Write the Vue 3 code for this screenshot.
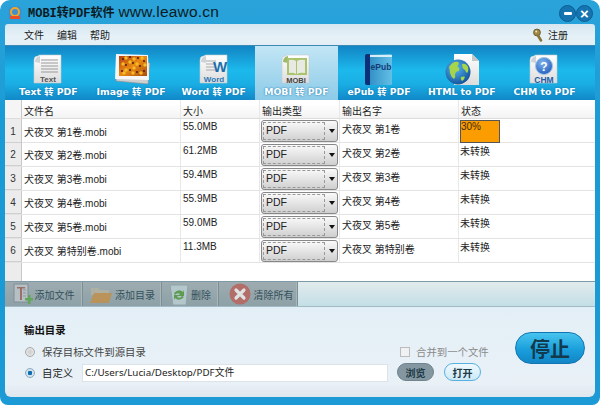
<script setup>
const tabs = [
  { key: 'text', label: 'Text 转 PDF' },
  { key: 'image', label: 'Image 转 PDF' },
  { key: 'word', label: 'Word 转 PDF' },
  { key: 'mobi', label: 'MOBI 转 PDF', active: true },
  { key: 'epub', label: 'ePub 转 PDF' },
  { key: 'html', label: 'HTML to PDF' },
  { key: 'chm', label: 'CHM to PDF' }
]
const rows = [
  { n: 1, file: '犬夜叉 第1卷.mobi', size: '55.0MB', name: '犬夜叉 第1卷', progress: '30%' },
  { n: 2, file: '犬夜叉 第2卷.mobi', size: '61.2MB', name: '犬夜叉 第2卷', status: '未转换' },
  { n: 3, file: '犬夜叉 第3卷.mobi', size: '59.4MB', name: '犬夜叉 第3卷', status: '未转换' },
  { n: 4, file: '犬夜叉 第4卷.mobi', size: '55.9MB', name: '犬夜叉 第4卷', status: '未转换' },
  { n: 5, file: '犬夜叉 第5卷.mobi', size: '59.0MB', name: '犬夜叉 第5卷', status: '未转换' },
  { n: 6, file: '犬夜叉 第特别卷.mobi', size: '11.3MB', name: '犬夜叉 第特别卷', status: '未转换' }
]
const darkDots = [[11,6],[18,4],[26,5],[32,8],[14,12],[21,10],[28,13],[10,18],[18,17],[25,19],[32,18]]
const lightDots = [[14,5],[22,6],[30,5],[11,11],[18,9],[25,11],[33,12],[14,17],[22,15],[29,20],[12,20],[21,20]]
</script>

<template>
  <div class="window">
    <header class="titlebar">
      <svg class="logo" viewBox="0 0 14 14" width="14" height="14">
        <rect x="0.5" y="0.5" width="13" height="13" rx="3" fill="#3d8fd0"/>
        <circle cx="7" cy="6" r="4" fill="none" stroke="#f5a623" stroke-width="2"/>
        <rect x="2" y="10" width="10" height="3" fill="#e8502a"/>
      </svg>
      <span class="title-main">MOBI转PDF软件</span>
      <span class="title-url">www.leawo.cn</span>
      <div class="win-btns">
        <span class="win-btn"><i class="glyph-min"></i></span>
        <span class="win-btn x">×</span>
      </div>
    </header>

    <nav class="menubar">
      <span>文件</span><span>编辑</span><span>帮助</span>
      <span class="register">
        <svg viewBox="0 0 10 14" width="10" height="14">
          <circle cx="4" cy="4.5" r="3.4" fill="#a08a4a" stroke="#6d5c2a"/>
          <circle cx="3.2" cy="3.6" r="1" fill="#f0e6c0"/>
          <path d="M5 7.5l3 5" stroke="#8a7536" stroke-width="2.6" stroke-linecap="round"/>
        </svg>
        注册
      </span>
    </nav>

    <section class="tabs">
      <div v-for="t in tabs" :key="t.key" class="tab" :class="{ active: t.active }">
        <svg class="tab-icon" viewBox="0 0 40 32" width="40" height="32">
          <defs>
            <linearGradient id="pg" x1="0" y1="0" x2="0" y2="1">
              <stop offset="0" stop-color="#ffffff"/><stop offset="1" stop-color="#dcdcdc"/>
            </linearGradient>
            <linearGradient id="bk" x1="0" y1="0" x2="1" y2="0">
              <stop offset="0" stop-color="#2a86c0"/><stop offset="1" stop-color="#62c0e6"/>
            </linearGradient>
            <radialGradient id="gl" cx="0.4" cy="0.35" r="0.7">
              <stop offset="0" stop-color="#58b8f0"/><stop offset="1" stop-color="#0f4f98"/>
            </radialGradient>
            <radialGradient id="qm" cx="0.4" cy="0.3" r="0.8">
              <stop offset="0" stop-color="#7fb4ee"/><stop offset="1" stop-color="#1c57b8"/>
            </radialGradient>
            <linearGradient id="fl" x1="0" y1="0" x2="1" y2="1">
              <stop offset="0" stop-color="#b8400f"/><stop offset="0.5" stop-color="#e88a12"/><stop offset="1" stop-color="#a84c10"/>
            </linearGradient>
          </defs>

          <template v-if="t.key === 'text'">
            <path class="page" d="M10 3q-4 0-4 4v23h27V2H13q-3 0-3 1z"/>
            <path d="M7 9q0-5 5-6v7z" fill="#cfd3d6"/>
            <path d="M13 7h17M13 10h17M13 13h17M13 16h17M13 19h17" stroke="#999" stroke-width="1"/>
            <text x="20" y="29" class="ilabel" fill="#555">Text</text>
          </template>

          <template v-else-if="t.key === 'image'">
            <path d="M6 6L39 10 37 31 5 28z" fill="#cfcfcf" stroke="#8f8f8f" stroke-width="0.6"/>
            <path d="M5 1L37 2 38 27 4 26z" fill="#f6f6f6"/>
            <rect x="8" y="3" width="28" height="20" fill="url(#fl)"/>
            <circle v-for="(d, i) in lightDots" :key="'l' + i" :cx="d[0] + 1" :cy="d[1]" r="1.7" fill="#f6bb2a"/>
            <circle v-for="(d, i) in darkDots" :key="'d' + i" :cx="d[0] + 1" :cy="d[1]" r="1.1" fill="#5a1f08"/>
          </template>

          <template v-else-if="t.key === 'word'">
            <path class="page" d="M10 3q-4 0-4 4v23h27V2H13q-3 0-3 1z"/>
            <path d="M7 9q0-5 5-6v7z" fill="#cfd3d6"/>
            <path d="M12 8h10M12 11h10M12 14h10M12 17h9" stroke="#aaa"/>
            <text x="26" y="19" class="iw">W</text>
            <text x="20" y="29" class="ilabel" fill="#2a78b5">Word</text>
          </template>

          <template v-else-if="t.key === 'mobi'">
            <path class="page" d="M10 3q-4 0-4 4v23h27V2H13q-3 0-3 1z"/>
            <path d="M7 9q0-5 5-6v7z" fill="#9db96c"/>
            <rect x="11" y="5" width="20" height="17" fill="#a9c46a"/>
            <path d="M13 7q4-1 7 1v13q-3-2-7-1zM21 8q3-2 8-1v13q-5-1-8 1z" fill="#e9e9e4"/>
            <text x="20" y="29.5" class="ilabel small" fill="#444">MOBI</text>
          </template>

          <template v-else-if="t.key === 'epub'">
            <rect x="6" y="1" width="27" height="31" rx="1.5" fill="url(#bk)"/>
            <path d="M6 3q0-2 2-2h3v31H8q-2 0-2-2z" fill="#0c2f78"/>
            <rect x="11" y="2" width="22" height="2" fill="#d6eef8"/>
            <text x="22" y="17" class="ilabel epub">ePub</text>
          </template>

          <template v-else-if="t.key === 'html'">
            <path d="M12 1h18l7 7v24H12z" fill="url(#pg)"/>
            <path d="M30 1l7 7h-7z" fill="#c6c6c6"/>
            <circle cx="16" cy="19" r="12.5" fill="url(#gl)"/>
            <path d="M7 14q4-6 9-5 2 2-1 4 3 2 2 5-3 0-4 3 1 3-1 5-3-2-4-6 0-3-1-6zM20 11q4-1 6 3 1 4-1 6-2-2-2-3-3-1-3-6zM19 24q3-1 4 0-1 3-3 4-2-2-1-4z" fill="#a5d54b"/>
          </template>

          <template v-else>
            <path class="page" d="M10 3q-4 0-4 4v23h27V2H13q-3 0-3 1z"/>
            <path d="M7 9q0-5 5-6v7z" fill="#cfd3d6"/>
            <circle cx="20" cy="13" r="8.5" fill="url(#qm)" stroke="#9cc4ea"/>
            <text x="20" y="17.5" class="iq">?</text>
            <text x="20" y="29.5" class="ilabel chm">CHM</text>
          </template>
        </svg>
        <span class="tab-label">{{ t.label }}</span>
      </div>
    </section>

    <section class="table">
      <div class="row head">
        <div class="c idx"></div>
        <div class="c">文件名</div>
        <div class="c">大小</div>
        <div class="c">输出类型</div>
        <div class="c">输出名字</div>
        <div class="c">状态</div>
      </div>
      <div v-for="r in rows" :key="r.n" class="row">
        <div class="c idx">{{ r.n }}</div>
        <div class="c file">{{ r.file }}</div>
        <div class="c size">{{ r.size }}</div>
        <div class="c type">
          <div class="select">
            <span class="select-val">PDF</span>
            <span class="caret"></span>
          </div>
        </div>
        <div class="c name">{{ r.name }}</div>
        <div class="c status">
          <div v-if="r.progress" class="bar">{{ r.progress }}</div>
          <template v-else>{{ r.status }}</template>
        </div>
      </div>
      <div class="table-rest"><div class="rest-idx"></div></div>
    </section>

    <section class="toolbar">
      <div class="tools">
        <div class="tool w1">
          <svg viewBox="0 0 20 22" width="20" height="22">
            <rect x="1" y="1" width="14" height="18" fill="#b6c0c4" stroke="#7f8e94"/>
            <path d="M4 4h8v1.5H9V17H7V5.5H4z" fill="#9a7068"/>
            <path d="M10 7h3M10 10h3M10 13h3" stroke="#8a989d"/>
            <path d="M12 15h3v-3h2.5v3h2.5v2.5h-2.5V21H15v-3.500h-3z" fill="#62a65c"/>
          </svg>
          添加文件
        </div>
        <div class="tool w2">
          <svg viewBox="0 0 24 20" width="24" height="20">
            <path d="M2 4h7l2 2h9v5H2z" fill="#aeb0a4"/>
            <path d="M5 9h18l-3 10H1z" fill="#b9935a"/>
          </svg>
          添加目录
        </div>
        <div class="tool w3">
          <svg viewBox="0 0 20 24" width="20" height="24">
            <path d="M1 3h18l-2 20H4z" fill="#b4c8cc" stroke="#90a4a8"/>
            <path d="M5 11q5-5 9-1l1-2v6h-6l2-2q-3-2-5 1zM15 15q-5 5-9 1l-1 2v-5h5l-2 2q3 2 5-1z" fill="#5d9c52"/>
          </svg>
          删除
        </div>
        <div class="tool w4">
          <svg viewBox="0 0 22 22" width="22" height="22">
            <circle cx="11" cy="11" r="10.5" fill="#b36e6a"/>
            <path d="M7 7l8 8M15 7l-8 8" stroke="#dfe3e3" stroke-width="3.2" stroke-linecap="round"/>
          </svg>
          清除所有
        </div>
      </div>
    </section>

    <section class="bottom">
      <div class="out-title">输出目录</div>
      <div class="opts">
        <div class="paths">
          <label class="line first">
            <span class="radio"></span>
            <span>保存目标文件到源目录</span>
          </label>
          <label class="line">
            <span class="radio on"></span>
            <span class="custom">自定义</span>
            <span class="path">C:/Users/Lucia/Desktop/PDF文件</span>
          </label>
        </div>
        <div class="side">
          <label class="merge"><span class="check"></span>合并到一个文件</label>
          <div class="btns">
            <span class="pill gray">浏览</span>
            <span class="pill blue">打开</span>
          </div>
        </div>
        <div class="stop">停止</div>
      </div>
    </section>
  </div>
</template>

<style scoped>
.window {
  width: 600px;
  height: 405px;
  box-sizing: border-box;
  padding: 0 5px 8px;
  background: linear-gradient(#2aa3da, #1a9bd6 30%, #1b9ad5);
  border-radius: 10px 10px 8px 8px;
  display: flex;
  flex-direction: column;
  font-family: "Liberation Sans", "Noto Sans CJK SC", sans-serif;
  font-size: 10px;
  color: #222;
  overflow: hidden;
}
.titlebar {
  height: 24px;
  display: flex;
  align-items: center;
  padding-left: 3px;
  color: #0c1a22;
}
.logo { margin-right: 6px; margin-top: 1px; }
.title-main {
  font-family: "Liberation Mono", "Noto Sans CJK SC", monospace;
  font-size: 12px;
  font-weight: 700;
}
.title-url {
  font-family: "Liberation Sans", sans-serif;
  font-size: 15.5px;
  margin-left: 4px;
  letter-spacing: 0.2px;
}
.win-btns { margin-left: auto; display: flex; margin-right: 2px; margin-top: 3px; }
.win-btn {
  width: 15px;
  height: 15px;
  border-radius: 50%;
  background: #1575b0;
  border: 1px solid #0e5d94;
  display: flex;
  align-items: center;
  justify-content: center;
  color: #fff;
  font: 700 15px/1 "Liberation Sans", sans-serif;
}
.glyph-min { width: 8px; height: 3px; background: #fff; border-radius: 1px; }
.menubar {
  height: 21px;
  display: flex;
  align-items: center;
  gap: 13px;
  padding-left: 19px;
  background: linear-gradient(#d6e6f0, #e6f1f7 60%, #e2eef5);
  border-bottom: 1px solid #3a8ab5;
  border-radius: 3px 3px 0 0;
  flex: none;
}
.register {
  margin-left: auto;
  margin-right: 27px;
  display: flex;
  align-items: center;
  gap: 5px;
}
.tabs {
  height: 54px;
  flex: none;
  display: grid;
  grid-template-columns: repeat(7, 82.7px);
  padding-left: 2px;
  background: linear-gradient(#1284c4, #1cb9ec 45%, #1aaee4 70%, #1288c8);
}
.tab {
  display: flex;
  flex-direction: column;
  align-items: center;
  padding-top: 7px;
  box-sizing: border-box;
}
.tab.active { background: linear-gradient(#c2e6f5, #8ccbe8); }
.tab-icon { flex: none; }
.tab-label {
  color: #fff;
  font: 700 9.3px/13px "DejaVu Sans", "Noto Sans CJK SC", sans-serif;
  white-space: nowrap;
  text-shadow: 0 0 2px #0d6ea8;
}
.page { fill: url(#pg); stroke: #c4c9cc; stroke-width: 0.6; }
.ilabel { font: 700 8px "Liberation Sans", sans-serif; text-anchor: middle; }
.ilabel.small { font-size: 7.5px; }
.ilabel.epub { fill: #123c78; font-size: 8.5px; }
.ilabel.chm { fill: #1c5ca8; font-size: 8.5px; }
.iw { font: 700 15px "Liberation Sans", sans-serif; fill: #1a6fae; text-anchor: middle; }
.iq { font: 700 12px "Liberation Sans", sans-serif; fill: #fff; text-anchor: middle; }

.table {
  flex: 1;
  background: #fff;
  display: flex;
  flex-direction: column;
  min-height: 0;
}
.row {
  display: grid;
  grid-template-columns: 17px 159px 79px 80px 119px 1fr;
  height: 24px;
  border-bottom: 1px solid #e3e3e3;
  box-sizing: border-box;
  flex: none;
}
.row.head {
  height: 19px;
  background: linear-gradient(#fff 20%, #f3f3f3);
  border-bottom: 1px solid #dcdcdc;
}
.c {
  border-right: 1px solid #e8e8e8;
  padding-left: 2px;
  display: flex;
  align-items: center;
  white-space: nowrap;
  min-width: 0;
}
.row.head .c { padding-top: 2px; box-sizing: border-box; }
.c:last-child { border-right: 0; }
.idx {
  background: #ececec;
  border-right: 1px solid #c8c8c8;
  box-shadow: inset 0 -1px 0 #cfcfcf;
  justify-content: center;
  padding-left: 0;
  color: #333;
}
.head .idx { background: #f5f5f5; box-shadow: none; }
.size { align-items: flex-start; padding-top: 2px; }
.name { align-items: flex-start; padding-top: 2px; }
.status { align-items: flex-start; padding: 0 0 0 1px; }
.type { padding: 0; justify-content: center; }
.select {
  width: 77px;
  height: 22px;
  box-sizing: border-box;
  border: 1px solid #888;
  border-radius: 3px;
  background: linear-gradient(#fafafa, #cfcfcf);
  display: flex;
  align-items: center;
}
.select-val {
  width: 62px;
  height: 18px;
  margin-left: 1px;
  border: 1px dashed #999;
  box-sizing: border-box;
  line-height: 15px;
  padding-left: 2px;
  font-size: 10.5px;
}
.caret {
  margin-left: 4px;
  border-left: 3.500px solid transparent;
  border-right: 3.500px solid transparent;
  border-top: 4px solid #111;
}
.bar {
  width: 40px;
  height: 23px;
  margin-top: 1px;
  box-sizing: border-box;
  background: #fb9c00;
  border: 1px solid #555;
  line-height: 12px;
  color: #3b2a00;
}
.table-rest { flex: 1; }
.rest-idx { width: 16px; height: 100%; background: #ececec; border-right: 1px solid #c8c8c8; }

.toolbar {
  height: 26px;
  flex: none;
  background: linear-gradient(#e2ebec, #c3dfe6);
  border-top: 1px solid #7d9aa6;
  border-bottom: 1px solid #a0bac6;
  box-sizing: border-box;
}
.tools {
  width: 293px;
  height: 100%;
  display: flex;
  background: linear-gradient(#9eacb0, #8da1a7);
  color: #34505c;
}
.tool {
  display: flex;
  align-items: center;
  justify-content: center;
  gap: 2px;
  border-right: 1px solid #7c8f95;
  box-sizing: border-box;
  white-space: nowrap;
  box-shadow: inset -1px 0 0 #a9b7bb;
}
.w1 { width: 78px; }
.w2 { width: 79px; }
.w3 { width: 57px; }
.w4 { width: 79px; padding-left: 6px; gap: 3px; }
.tool svg { flex: none; }

.bottom {
  height: 90px;
  flex: none;
  box-sizing: border-box;
  background: linear-gradient(#e3eff6, #e9f1f7 85%, #dfe7ee);
  border-radius: 0 0 6px 6px;
  padding: 16px 0 0 19px;
  font-family: "Noto Sans", "Noto Sans CJK SC", sans-serif;
  font-size: 10.4px;
}
.out-title { font-weight: 700; line-height: 14px; color: #111; }
.opts { display: flex; }
.paths { width: 369px; }
.line { display: flex; align-items: center; height: 21px; }
.line.first { margin-top: 4px; color: #444; }
.radio {
  width: 10px;
  height: 10px;
  border-radius: 50%;
  border: 1px solid #aaa;
  background: radial-gradient(#ccc, #eee);
  box-sizing: border-box;
  margin: 0 7px 0 1px;
  flex: none;
}
.radio.on { border-color: #8fa9bc; background: radial-gradient(#0f6db0 35%, #cfe2ee 45%); }
.custom { width: 40px; }
.path {
  width: 306px;
  height: 18px;
  box-sizing: border-box;
  background: #fff;
  border: 1px solid #dbe4ea;
  line-height: 16px;
  padding-left: 2px;
  color: #222;
  font-size: 9.8px;
}
.side { width: 108px; }
.merge {
  display: flex;
  align-items: center;
  height: 21px;
  margin-top: 4px;
  margin-left: 7px;
  color: #8a8a8a;
}
.check {
  width: 10px;
  height: 10px;
  border: 1px solid #bbb;
  background: #eef2f5;
  box-sizing: border-box;
  margin-right: 6px;
}
.btns { display: flex; gap: 10px; margin-left: 4px; margin-top: 1px; }
.pill {
  width: 37px;
  height: 18px;
  border-radius: 9px;
  box-sizing: border-box;
  display: flex;
  align-items: center;
  justify-content: center;
  font-weight: 700;
  font-size: 10px;
  color: #1c3a48;
}
.pill.gray { background: #84969f; border: 1px solid #6f848e; }
.pill.blue { background: linear-gradient(#f0f9fd, #cbe9f7); border: 1px solid #56b0e0; }
.stop {
  width: 70px;
  height: 32px;
  margin: -5px 0 0 14px;
  border-radius: 16px;
  box-sizing: border-box;
  border: 1px solid #1276b2;
  background: linear-gradient(#48c4ee, #1a9fdc 55%, #1286c6);
  color: #123a4e;
  font-size: 20px;
  font-weight: 700;
  display: flex;
  align-items: center;
  justify-content: center;
  flex: none;
}
</style>

<style>
html, body { background: #fff; margin: 0; }
</style>
